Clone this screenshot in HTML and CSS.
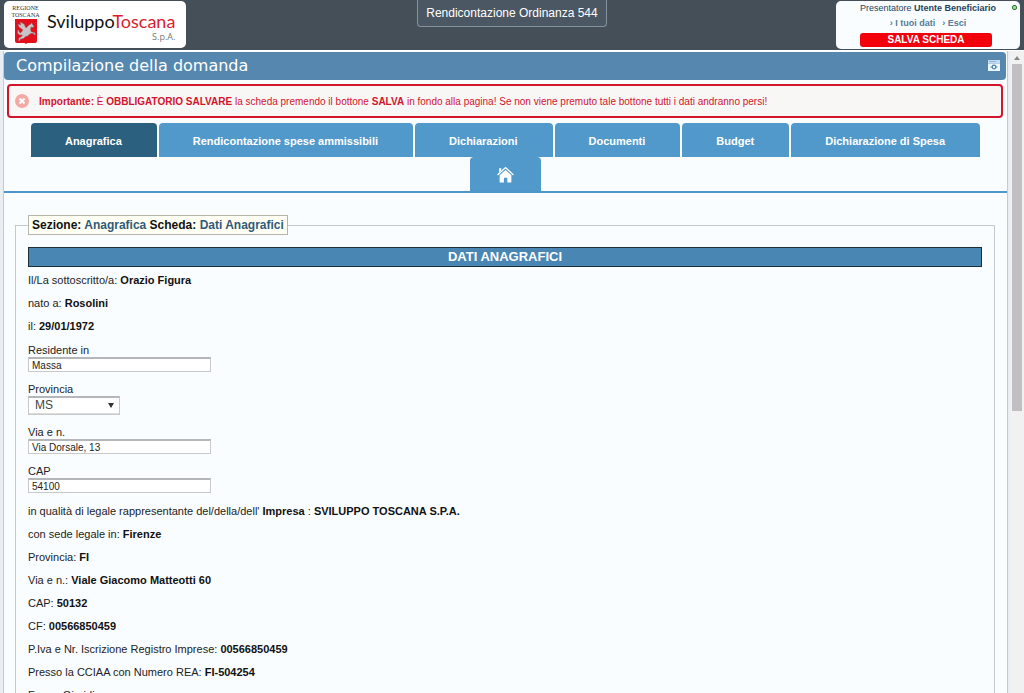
FILE: index.html
```html
<!DOCTYPE html>
<html lang="it">
<head>
<meta charset="utf-8">
<title>Compilazione della domanda</title>
<link rel="stylesheet" href="styles.css">
</head>
<body>
<header class="topbar">
  <div class="logo">
    <div class="region">
      <span class="region-name">REGIONE TOSCANA</span>
      <svg class="shield" viewBox="0 0 24 25" aria-hidden="true">
        <path fill="#e2101c" d="M1 0h22v22q0 2-2 2h-7.500l-1.500 1-1.500-1H3q-2 0-2-2z"/>
        <path fill="#c9c3c5" stroke="#77686d" stroke-width=".4" d="M9 11L5 8 4 5l3 1-1-3 4 2 2 4 3-3 2-1 .5-1.500.8 1.500 1.700 2.500-1 1-2-.5-.5 3 1 2 3 .5 1 2-1 .5-1-1.500-3 0-3 2.500-2 .5-2 2-3 .5-1 2-1-.5.5-2.500 2.500-1.500 1-1.500-3 0-2-2 .5-3 .8 0 .3 2 1.500 1z"/>
      </svg>
    </div>
    <div class="brand">
      <span class="brand-name">Sviluppo<span class="brand-red">Toscana</span></span>
      <span class="brand-type">S.p.A.</span>
    </div>
  </div>
  <div class="call-title">Rendicontazione Ordinanza 544</div>
  <div class="user-box">
    <div class="user-name">Presentatore <b>Utente Beneficiario</b></div>
    <nav class="user-links"><a href="#">› I tuoi dati</a><a href="#">› Esci</a></nav>
    <button class="save" type="button">SALVA SCHEDA</button>
    <span class="status"></span>
  </div>
</header>
<div class="workspace">
  <main class="page">
    <div class="page-title">
      <h1>Compilazione della domanda</h1>
      <svg class="panel-icon" viewBox="0 0 12 12" aria-hidden="true">
        <path fill="#c3dcf2" d="M0 0h12v3H0z"/><path fill="#8fb4d6" d="M1 1h7v1H1z"/>
        <path fill="#eef6fd" d="M0 3h12v8H0z"/><path fill="#8fb4d6" d="M0 3h12v.6H0z"/><circle cx="6" cy="7" r="1.800" fill="none" stroke="#4c82b0" stroke-width="1.200"/>
        <path fill="#4c82b0" d="M2.500 6.500h1.500v1H2.500zm5.500 0h1.500v1H8z"/>
      </svg>
    </div>
    <div class="warning">
      <svg class="warning-icon" viewBox="0 0 14 14" aria-hidden="true"><circle cx="7" cy="7" r="7" fill="#f2a9a3"/><path d="M4.500 4.500l5 5m0-5l-5 5" stroke="#fff" stroke-width="2.200"/></svg>
      <p><b>Importante:</b> È <b>OBBLIGATORIO SALVARE</b> la scheda premendo il bottone <b>SALVA</b> in fondo alla pagina! Se non viene premuto tale bottone tutti i dati andranno persi!</p>
    </div>
    <nav class="tabs">
      <a class="tab active" href="#">Anagrafica</a>
      <a class="tab" href="#">Rendicontazione spese ammissibili</a>
      <a class="tab" href="#">Dichiarazioni</a>
      <a class="tab" href="#">Documenti</a>
      <a class="tab" href="#">Budget</a>
      <a class="tab" href="#">Dichiarazione di Spesa</a>
      <a class="tab home" href="#" aria-label="Home">
        <svg viewBox="0 0 16 16" aria-hidden="true"><path fill="none" stroke="#fff" stroke-width="1.300" d="M.5 8.500L8 1.500l7.500 7"/><path fill="#fff" d="M2 2h2v2L2 6zM8 3.700l5.500 5V15.500H9.700V11H6.500v4.500h-4V8.700z"/></svg>
      </a>
    </nav>
    <form class="sheet">
      <fieldset>
        <legend>Sezione: <span>Anagrafica</span> Scheda: <span>Dati Anagrafici</span></legend>
        <h2>DATI ANAGRAFICI</h2>
        <p>Il/La sottoscritto/a: <b>Orazio Figura</b></p>
        <p>nato a: <b>Rosolini</b></p>
        <p>il: <b>29/01/1972</b></p>
        <div class="fields">
          <div class="field"><label for="city">Residente in</label><input id="city" type="text" value="Massa"></div>
          <div class="field"><label for="prov">Provincia</label>
            <div class="select-wrap"><select id="prov"><option>MS</option></select></div></div>
          <div class="field"><label for="street">Via e n.</label><input id="street" type="text" value="Via Dorsale, 13"></div>
          <div class="field"><label for="zip">CAP</label><input id="zip" type="text" value="54100"></div>
        </div>
        <p>in qualità di legale rappresentante del/della/dell' <b>Impresa</b> : <b>SVILUPPO TOSCANA S.P.A.</b></p>
        <p>con sede legale in: <b>Firenze</b></p>
        <p>Provincia: <b>FI</b></p>
        <p>Via e n.: <b>Viale Giacomo Matteotti 60</b></p>
        <p>CAP: <b>50132</b></p>
        <p>CF: <b>00566850459</b></p>
        <p>P.Iva e Nr. Iscrizione Registro Imprese: <b>00566850459</b></p>
        <p>Presso la CCIAA con Numero REA: <b>FI-504254</b></p>
        <p>Forma Giuridica:</p>
      </fieldset>
    </form>
  </main>
  <div class="scrollbar" aria-hidden="true"><span class="arrow"></span><span class="thumb"></span></div>
</div>
</body>
</html>
```

FILE: styles.css
```css
* { box-sizing: border-box; }
body {
  margin: 0;
  height: 100vh;
  overflow: hidden;
  display: flex;
  flex-direction: column;
  font-family: "Liberation Sans", Arial, sans-serif;
  font-size: 11px;
  color: #222;
  background: #e9eef4;
}
a { text-decoration: none; }
h1, h2, p { margin: 0; }

.topbar {
  flex: none;
  display: grid;
  grid-template-columns: 1fr auto 1fr;
  align-items: start;
  height: 51px;
  padding: 0 4px;
  background: #444f58;
  border-bottom: 1px solid #fff;
}
.logo {
  display: flex;
  gap: 8px;
  width: 182px;
  height: 47px;
  margin-top: 1px;
  padding: 4px 8px;
  background: #fff;
  border-radius: 5px;
}
.region { width: 27px; display: flex; flex-direction: column; align-items: center; }
.region-name {
  font: 6px/7px "Liberation Serif", serif;
  text-align: center;
  color: #333;
}
.shield { width: 24px; height: 25px; }
.brand { display: flex; flex-direction: column; padding-top: 5px; }
.brand-name { font: 18px/22px Lato, "Noto Sans", sans-serif; color: #111; }
.brand-red { color: #d81e30; }
.brand-type { font: 9px/9px "Open Sans", sans-serif; color: #777; text-align: right; }
.call-title {
  padding: 5px 8px;
  font-size: 12px;
  line-height: 16px;
  color: #fff;
  background: #4b5762;
  border: 1px solid #87939c;
  border-top: 0;
  border-radius: 0 0 4px 4px;
}
.user-box {
  position: relative;
  justify-self: end;
  display: flex;
  flex-direction: column;
  align-items: center;
  width: 184px;
  height: 48px;
  margin-top: 1px;
  background: #f9fdff;
  border-radius: 5px;
  font-size: 9px;
  color: #24435e;
}
.user-name { line-height: 14px; }
.user-links { display: flex; gap: 7px; line-height: 16px; }
.user-links a { color: #547b9b; font-weight: bold; }
.save {
  width: 132px;
  height: 14px;
  margin: 2px 4px 0 0;
  padding: 0;
  border: 0;
  border-radius: 3px;
  background: #f3000d;
  color: #fff;
  font: bold 10px/14px "Liberation Sans", Arial, sans-serif;
}
.status {
  position: absolute;
  top: 4px;
  right: 3px;
  width: 5px;
  height: 5px;
  border: 1px solid #2d7a2d;
  border-radius: 2px;
  background: #a4d8a0;
}

.workspace { flex: 1; min-height: 0; display: flex; }
.page {
  flex: 1;
  min-width: 0;
  margin-left: 3px;
  overflow: hidden;
  background: #fafdff;
  border: solid #c3cad6;
  border-width: 0 1px;
}
.page-title {
  display: flex;
  align-items: center;
  justify-content: space-between;
  height: 28px;
  margin: 1px 1px 0 0;
  padding: 0 6px 0 12px;
  background: #5688af;
  border-radius: 4px;
}
.page-title h1 { font: 16px/28px "DejaVu Sans", sans-serif; color: #fff; }
.panel-icon { width: 12px; height: 12px; }
.warning {
  display: flex;
  align-items: center;
  gap: 10px;
  height: 34px;
  margin: 4px 4px 5px 3px;
  padding: 0 6px;
  background: #f9f7f6;
  border: 2px solid #d3142d;
  border-radius: 4px;
  color: #d3142d;
  font-size: 10px;
}
.warning-icon { width: 14px; height: 14px; }
.tabs {
  display: flex;
  flex-wrap: wrap;
  justify-content: center;
  column-gap: 2px;
  border-bottom: 2px solid #4f97cb;
}
.tab {
  height: 34px;
  padding: 0 35px 0 34px;
  background: #5199cb;
  border-radius: 4px 4px 0 0;
  color: #fff;
  font-weight: bold;
  line-height: 36px;
}
.tab.active { background: #2c607f; }
.tab.home { display: flex; align-items: center; padding: 0 27px; }
.tab svg { width: 17px; height: 17px; }

.sheet { padding: 22px 12px 0 11px; }
fieldset {
  margin: 0;
  padding: 12px 12px 0;
  border: 1px solid #c5c9cd;
}
legend {
  padding: 0 3px;
  background: #fffff4;
  border: 1px solid #b5b5a9;
  color: #111;
  font-size: 12px;
  font-weight: bold;
  line-height: 18px;
}
legend span { color: #315a78; }
h2 {
  margin-bottom: 6px;
  background: #4a86b3;
  border: 1px solid #1d2d38;
  color: #fff;
  font-size: 13px;
  line-height: 18px;
  text-align: center;
}
.sheet p { margin-bottom: 9px; line-height: 14px; }
.sheet b { color: #111; }
.fields { padding: 1px 0; }
.field { display: flex; flex-direction: column; align-items: flex-start; margin-bottom: 10px; }
.field label { line-height: 14px; }
.field input, .select-wrap {
  background: #fff;
  border: 1px solid #c7c9cb;
  border-top: 2px solid #b4b6b9;
}
.field input {
  width: 183px;
  height: 15px;
  padding: 0 3px;
  font: 10px/12px "Liberation Sans", Arial, sans-serif;
  color: #222;
}
.select-wrap { position: relative; width: 92px; height: 19px; }
.select-wrap::after {
  content: "";
  position: absolute;
  right: 5px;
  top: 5px;
  border: solid transparent;
  border-width: 5px 3px 0;
  border-top-color: #333;
}
select {
  appearance: none;
  width: 100%;
  height: 16px;
  padding: 0 6px;
  border: 0;
  border-bottom: 1px solid #ddd;
  background: none;
  color: #444;
  font: 12px/15px "Liberation Sans", Arial, sans-serif;
}

.scrollbar {
  flex: none;
  display: flex;
  flex-direction: column;
  align-items: center;
  width: 14px;
  margin-left: 2px;
  background: #f1f1f1;
}
.arrow {
  margin: 5px 0 4px;
  border: solid transparent;
  border-width: 0 3px 4px;
  border-bottom-color: #888;
}
.thumb { width: 10px; height: 54%; background: #c1bfc1; }
```
